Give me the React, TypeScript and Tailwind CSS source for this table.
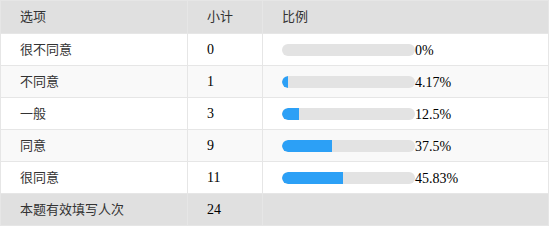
const rows = [
  { label: "很不同意", count: 0, pct: 0, text: "0%" },
  { label: "不同意", count: 1, pct: 4.17, text: "4.17%" },
  { label: "一般", count: 3, pct: 12.5, text: "12.5%" },
  { label: "同意", count: 9, pct: 37.5, text: "37.5%" },
  { label: "很同意", count: 11, pct: 45.83, text: "45.83%" },
];

function Bar({ pct }: { pct: number }) {
  return (
    <div className="h-3 w-[133px] rounded-full bg-[#e3e3e3] overflow-hidden">
      <div className="h-full rounded-l-full bg-[#2ca0f6]" style={{ width: `${pct}%` }} />
    </div>
  );
}

export default function App() {
  return (
    <div className="w-[550px] h-[247px] bg-white font-['Liberation_Serif','Noto_Sans_CJK_SC',serif] text-[13px] text-[#333]">
      <table className="w-[549px] border-collapse table-fixed">
        <colgroup>
          <col className="w-[187px]" />
          <col className="w-[75px]" />
          <col />
        </colgroup>
        <thead>
          <tr className="h-[33px] bg-[#e0e0e0]">
            <th className="border border-[#e6e6e6] pl-[19px] text-left font-normal">选项</th>
            <th className="border border-[#e6e6e6] pl-[19px] text-left font-normal">小计</th>
            <th className="border border-[#e6e6e6] pl-[19px] text-left font-normal">比例</th>
          </tr>
        </thead>
        <tbody>
          {rows.map((r, i) => (
            <tr key={r.label} className={`h-[32px] ${i % 2 === 1 ? "bg-[#f9f9f9]" : "bg-white"}`}>
              <td className="border border-[#e6e6e6] pl-[19px]">{r.label}</td>
              <td className="border border-[#e6e6e6] pl-[19px] text-[14px] text-black">{r.count}</td>
              <td className="border border-[#e6e6e6] pl-[19px]">
                <div className="flex items-center">
                  <Bar pct={r.pct} />
                  <span className="text-[14px] text-black leading-none pt-[3px]">{r.text}</span>
                </div>
              </td>
            </tr>
          ))}
          <tr className="h-[32px] bg-[#e0e0e0]">
            <td className="border border-[#e6e6e6] pl-[19px]">本题有效填写人次</td>
            <td className="border border-[#e6e6e6] pl-[19px] text-[14px] text-black">24</td>
            <td className="border border-[#e6e6e6]"></td>
          </tr>
        </tbody>
      </table>
    </div>
  );
}
